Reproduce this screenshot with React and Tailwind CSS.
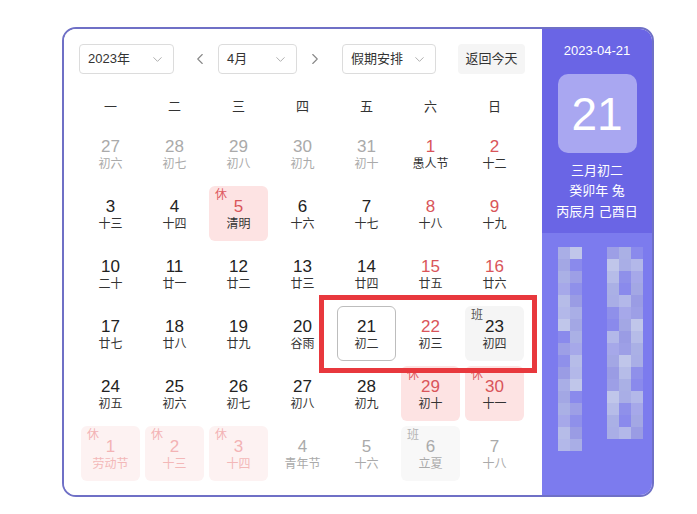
import React from 'react';
import { ChevronDown, ChevronLeft, ChevronRight } from 'lucide-react';

const weekdays = ['一', '二', '三', '四', '五', '六', '日'];

// flags: other (faded), red (weekend), rest (休 holiday), work (班), today
const days = [
  { d: 27, l: '初六', other: true }, { d: 28, l: '初七', other: true }, { d: 29, l: '初八', other: true },
  { d: 30, l: '初九', other: true }, { d: 31, l: '初十', other: true }, { d: 1, l: '愚人节', red: true }, { d: 2, l: '十二', red: true },
  { d: 3, l: '十三' }, { d: 4, l: '十四' }, { d: 5, l: '清明', rest: true }, { d: 6, l: '十六' },
  { d: 7, l: '十七' }, { d: 8, l: '十八', red: true }, { d: 9, l: '十九', red: true },
  { d: 10, l: '二十' }, { d: 11, l: '廿一' }, { d: 12, l: '廿二' }, { d: 13, l: '廿三' },
  { d: 14, l: '廿四' }, { d: 15, l: '廿五', red: true }, { d: 16, l: '廿六', red: true },
  { d: 17, l: '廿七' }, { d: 18, l: '廿八' }, { d: 19, l: '廿九' }, { d: 20, l: '谷雨' },
  { d: 21, l: '初二', today: true }, { d: 22, l: '初三', red: true }, { d: 23, l: '初四', work: true },
  { d: 24, l: '初五' }, { d: 25, l: '初六' }, { d: 26, l: '初七' }, { d: 27, l: '初八' },
  { d: 28, l: '初九' }, { d: 29, l: '初十', rest: true }, { d: 30, l: '十一', rest: true },
  { d: 1, l: '劳动节', other: true, rest: true }, { d: 2, l: '十三', other: true, rest: true },
  { d: 3, l: '十四', other: true, rest: true }, { d: 4, l: '青年节', other: true },
  { d: 5, l: '十六', other: true }, { d: 6, l: '立夏', other: true, work: true }, { d: 7, l: '十八', other: true },
];

const blur = ['#a9aee6', '#b6bce8', '#9d9fe6', '#a3a7e4', '#b3b8e9', '#8f90ea', '#aab0e5', '#c0c6ea', '#9a9ce4', '#a6a8e9', '#8a8aec'];

function Cell({ day }) {
  let box = 'bg-white';
  let num = 'text-[#222]';
  let lunar = 'text-[#333]';
  if (day.rest && day.other) {
    box = 'bg-[#fdf2f2]';
    num = 'text-[#f3b3b5]';
    lunar = 'text-[#f3b8b8]';
  } else if (day.rest) {
    box = 'bg-[#fde3e3]';
    num = 'text-[#d9555a]';
  } else if (day.work && day.other) {
    box = 'bg-[#f8f8f8]';
    num = 'text-[#aaa]';
    lunar = 'text-[#aaa]';
  } else if (day.work) {
    box = 'bg-[#f5f5f5]';
  } else if (day.other) {
    num = 'text-[#aaa]';
    lunar = 'text-[#aaa]';
  } else if (day.red) {
    num = 'text-[#d9555a]';
  }
  return (
    <div
      className={`relative flex h-[55px] flex-col items-center justify-center rounded-md pt-[3px] ${box} ${
        day.today ? 'border-[1.5px] border-[#bdbdbd]' : ''
      }`}
    >
      {day.rest && (
        <span className={`absolute left-[6px] top-[3px] text-[12px] leading-none ${day.other ? 'text-[#f3b3b5]' : 'text-[#dd5a5f]'}`}>休</span>
      )}
      {day.work && (
        <span className={`absolute left-[6px] top-[3px] text-[12px] leading-none ${day.other ? 'text-[#b5b5b5]' : 'text-[#555]'}`}>班</span>
      )}
      <span className={`text-[17px] leading-[19px] ${num}`}>{day.d}</span>
      <span className={`text-[12px] leading-[17px] ${lunar}`}>{day.l}</span>
    </div>
  );
}

function Select({ label, width }) {
  return (
    <div className={`flex h-[30px] items-center justify-between rounded border border-[#dcdcdc] bg-white pl-2 pr-2 text-[13px] text-[#333] ${width}`}>
      <span>{label}</span>
      <ChevronDown size={15} strokeWidth={1.5} className="text-[#aaa]" />
    </div>
  );
}

export default function App() {
  return (
    <div
      className="relative min-h-[514px] bg-white pl-[62px] pt-[27px]"
      style={{ fontFamily: '"Liberation Sans", "Noto Sans CJK SC", sans-serif' }}
    >
      <div className="flex h-[470px] w-[592px] overflow-hidden rounded-[14px] border-2 border-[#6f70c6]">
        <div className="w-[478px] bg-white pl-[15px] pt-[15px]">
          <div className="flex items-center">
            <Select label="2023年" width="w-[95px]" />
            <ChevronLeft size={18} strokeWidth={1.5} className="ml-[17px] text-[#888]" />
            <div className="ml-[9px]">
              <Select label="4月" width="w-[79px]" />
            </div>
            <ChevronRight size={18} strokeWidth={1.5} className="ml-[9px] text-[#888]" />
            <div className="ml-[18px]">
              <Select label="假期安排" width="w-[94px]" />
            </div>
            <div className="ml-[22px] flex h-[30px] w-[67px] items-center justify-center rounded bg-[#f5f5f5] text-[13px] text-[#333]">
              返回今天
            </div>
          </div>

          <div className="ml-[2px] mt-[18px] grid w-[443px] grid-cols-7 gap-x-[5px]">
            {weekdays.map((w) => (
              <div key={w} className="flex h-[30px] items-center justify-center text-[13px] text-[#333]">
                {w}
              </div>
            ))}
          </div>

          <div className="ml-[2px] mt-[4px] grid w-[443px] grid-cols-7 gap-x-[5px] gap-y-[5px]">
            {days.map((day, i) => (
              <Cell key={i} day={day} />
            ))}
          </div>
        </div>

        <div className="flex flex-1 flex-col">
          <div className="flex h-[204px] flex-col items-center bg-[#6a65e5] pt-[14px] text-white">
            <div className="text-[13px] leading-[16px]">2023-04-21</div>
            <div className="mt-[15px] flex h-[79px] w-[79px] items-center justify-center rounded-[10px] bg-[#a9a7f1] text-[46px] leading-none">
              21
            </div>
            <div className="mt-[8px] text-[13px] leading-[20px]">三月初二</div>
            <div className="text-[13px] leading-[20px]">癸卯年 兔</div>
            <div className="text-[13px] leading-[21px]">丙辰月 己酉日</div>
          </div>
          <div className="flex flex-1 gap-[25px] bg-[#7c7bee] pl-[16px] pt-[14px]">
            <div className="flex flex-col">
              {Array.from({ length: 17 }).map((_, r) => (
                <div key={r} className="flex">
                  {[0, 1].map((c) => (
                    <div key={c} className="h-[12px] w-[12px]" style={{ background: blur[(r * 3 + c * 7) % blur.length] }} />
                  ))}
                </div>
              ))}
            </div>
            <div className="flex flex-col">
              {Array.from({ length: 16 }).map((_, r) => (
                <div key={r} className="flex">
                  {[0, 1, 2].map((c) => (
                    <div key={c} className="h-[12px] w-[12px]" style={{ background: blur[(r * 5 + c * 4 + 2) % blur.length] }} />
                  ))}
                </div>
              ))}
            </div>
          </div>
        </div>
      </div>

      <div className="pointer-events-none absolute left-[319px] top-[295px] h-[78px] w-[218px] border-[5px] border-[#e8383d]" />
    </div>
  );
}
